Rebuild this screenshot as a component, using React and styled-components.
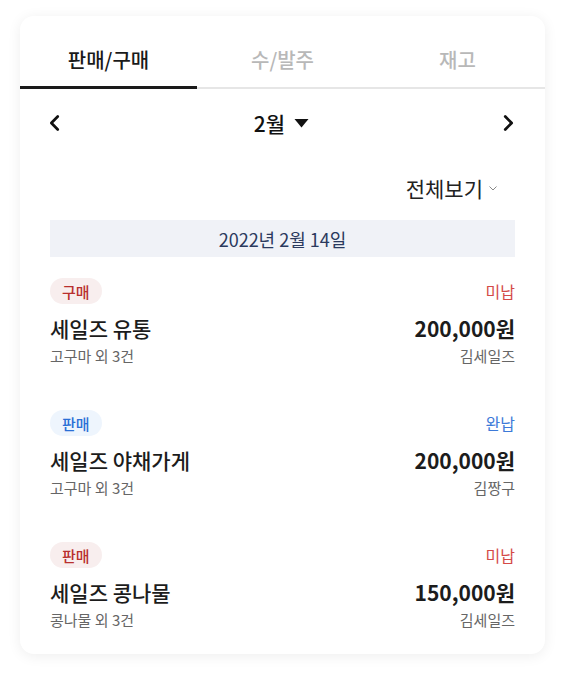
import React from 'react'
import styled, { createGlobalStyle } from 'styled-components'

const Global = createGlobalStyle`
  body {
    margin: 0;
    background: #ffffff;
    font-family: "Noto Sans CJK KR", "Noto Sans", sans-serif;
  }
`

const items = [
  { type: '구매', tone: 'red', status: '미납', name: '세일즈 유통', amount: '200,000원', sub: '고구마 외 3건', person: '김세일즈' },
  { type: '판매', tone: 'blue', status: '완납', name: '세일즈 야채가게', amount: '200,000원', sub: '고구마 외 3건', person: '김짱구' },
  { type: '판매', tone: 'red', status: '미납', name: '세일즈 콩나물', amount: '150,000원', sub: '콩나물 외 3건', person: '김세일즈' },
]

function App() {
  return (
    <Page>
      <Global />
      <Card>
        <Tabs>
          <Tab active>판매/구매</Tab>
          <Tab>수/발주</Tab>
          <Tab>재고</Tab>
        </Tabs>
        <MonthBar>
          <Arrow viewBox="0 0 24 24">
            <path d="M15 5l-7 7 7 7" />
          </Arrow>
          <Month>
            2월
            <svg width="15" height="10" viewBox="0 0 15 10">
              <path d="M0.5 1h14L7.5 9.5z" fill="#111" />
            </svg>
          </Month>
          <Arrow viewBox="0 0 24 24">
            <path d="M9 5l7 7-7 7" />
          </Arrow>
        </MonthBar>
        <Body>
          <FilterRow>
            <Filter>
              전체보기
              <svg width="10" height="8" viewBox="0 0 10 8">
                <path d="M1.5 2.5L5 6l3.5-3.5" fill="none" stroke="#888" strokeWidth="1" />
              </svg>
            </Filter>
          </FilterRow>
          <DateBar>2022년 2월 14일</DateBar>
          <List>
            {items.map((it, i) => (
              <Item key={i}>
                <Row>
                  <Badge tone={it.tone}>{it.type}</Badge>
                  <Status tone={it.tone}>{it.status}</Status>
                </Row>
                <Row>
                  <Name>{it.name}</Name>
                  <Amount>{it.amount}</Amount>
                </Row>
                <Row>
                  <Sub>{it.sub}</Sub>
                  <Sub>{it.person}</Sub>
                </Row>
              </Item>
            ))}
          </List>
        </Body>
      </Card>
    </Page>
  )
}

export default App

const Page = styled.div`
  padding: 16px 20px 24px;
`

const Card = styled.div`
  background: #fff;
  border-radius: 14px;
  box-shadow: 0 2px 14px rgba(0, 0, 0, 0.07);
  padding-top: 24px;
  padding-bottom: 22px;
  overflow: hidden;
`

const Tabs = styled.div`
  display: grid;
  grid-template-columns: 1fr 1fr 1fr;
  border-bottom: 2px solid #e6e6e6;
`

const Tab = styled.div`
  text-align: center;
  font-size: 20px;
  font-weight: 500;
  color: ${p => (p.active ? '#1a1a1a' : '#b8b8b8')};
  height: 49px;
  line-height: 40px;
  margin-bottom: -2px;
  border-bottom: 3px solid ${p => (p.active ? '#1a1a1a' : 'transparent')};
  box-sizing: border-box;
  margin-right: ${p => (p.active ? '-2px' : '0')};
`

const MonthBar = styled.div`
  display: flex;
  align-items: center;
  justify-content: space-between;
  padding: 18px 26px 0 24px;
  height: 32px;
`

const Arrow = styled.svg`
  width: 22px;
  height: 22px;
  fill: none;
  stroke: #111;
  stroke-width: 3;
  stroke-linecap: round;
  stroke-linejoin: round;
`

const Month = styled.div`
  display: flex;
  align-items: center;
  gap: 9px;
  font-size: 21px;
  font-weight: 500;
  color: #111;
`

const Body = styled.div`
  padding: 0 30px;
`

const FilterRow = styled.div`
  display: flex;
  justify-content: flex-end;
  padding: 34px 17px 0 0;
`

const Filter = styled.div`
  display: flex;
  align-items: center;
  gap: 5px;
  font-size: 21px;
  color: #222;
  height: 30px;
`

const DateBar = styled.div`
  margin-top: 17px;
  background: #f0f2f7;
  height: 37px;
  display: flex;
  align-items: center;
  justify-content: center;
  font-size: 18px;
  color: #2b3a5e;
`

const List = styled.div`
  display: flex;
  flex-direction: column;
  gap: 42px;
  padding-top: 21px;
`

const Item = styled.div`
  display: flex;
  flex-direction: column;
`

const Row = styled.div`
  display: flex;
  justify-content: space-between;
  align-items: center;
`

const Badge = styled.span`
  display: inline-flex;
  align-items: center;
  justify-content: center;
  height: 26px;
  padding: 0 12px;
  border-radius: 13px;
  font-size: 15px;
  font-weight: 500;
  background: ${p => (p.tone === 'blue' ? '#eef5fd' : '#f8eeee')};
  color: ${p => (p.tone === 'blue' ? '#2a6fd6' : '#b9302e')};
`

const Status = styled.span`
  font-size: 16px;
  color: ${p => (p.tone === 'blue' ? '#3d7ad8' : '#d44a48')};
`

const Name = styled.span`
  font-size: 21px;
  font-weight: 500;
  color: #1c1c1c;
  line-height: 30px;
  margin-top: 9px;
`

const Amount = styled.span`
  font-size: 21px;
  font-weight: 600;
  color: #1c1c1c;
  line-height: 30px;
  margin-top: 9px;
`

const Sub = styled.span`
  font-size: 15px;
  color: #666;
  line-height: 24px;
  margin-top: 1px;
`
